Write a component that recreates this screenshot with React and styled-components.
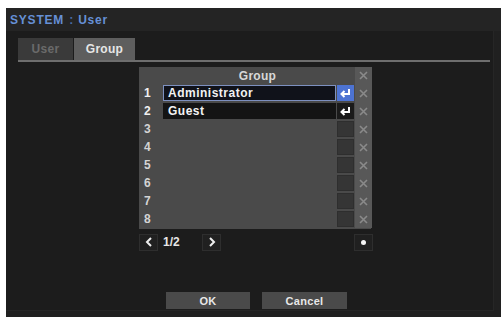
import React from 'react';
import styled, { createGlobalStyle } from 'styled-components';

const GlobalStyle = createGlobalStyle`
  html, body {
    margin: 0;
    padding: 0;
    background: #fff;
  }
  body {
    font-family: "Liberation Sans", Arial, sans-serif;
  }
`;

const groups = ['Administrator', 'Guest', '', '', '', '', '', ''];

function EnterIcon() {
  return (
    <svg width="11" height="10" viewBox="0 0 11 10">
      <path d="M9 1 V6 H2.5" stroke="#fff" strokeWidth="2" fill="none" />
      <path d="M4.5 3 L1.5 6 L4.5 9" stroke="#fff" strokeWidth="2" fill="none" />
    </svg>
  );
}

function CloseIcon() {
  return (
    <svg width="9" height="9" viewBox="0 0 9 9">
      <path d="M1 1 L8 8 M8 1 L1 8" stroke="#8a8a8a" strokeWidth="1.6" />
    </svg>
  );
}

function Chevron({ dir }) {
  const d = dir === 'left' ? 'M6 1 L2 5 L6 9' : 'M2 1 L6 5 L2 9';
  return (
    <svg width="8" height="10" viewBox="0 0 8 10">
      <path d={d} stroke="#eee" strokeWidth="2" fill="none" />
    </svg>
  );
}

export default function App() {
  return (
    <>
      <GlobalStyle />
      <Page>
        <Window>
          <TitleBar>
            <TitleStrong>SYSTEM</TitleStrong>
            <TitleSep>:</TitleSep>
            <TitleStrong>User</TitleStrong>
          </TitleBar>
          <Body>
            <Tabs>
              <Tab>User</Tab>
              <Tab active>Group</Tab>
            </Tabs>

            <Panel>
              <HeaderCell>Group</HeaderCell>
              <XCell><CloseIcon /></XCell>
              {groups.map((name, i) => (
                <React.Fragment key={i}>
                  <NumCell dim={!name}>{i + 1}</NumCell>
                  <NameCell>
                    {name && <NameBox selected={i === 0}>{name}</NameBox>}
                  </NameCell>
                  <EnterCell state={i === 0 ? 'active' : name ? 'filled' : 'empty'}>
                    {name && <EnterIcon />}
                  </EnterCell>
                  <XCell><CloseIcon /></XCell>
                </React.Fragment>
              ))}
            </Panel>

            <Pager>
              <PageButton><Chevron dir="left" /></PageButton>
              <PageText>1/2</PageText>
              <PageButton><Chevron dir="right" /></PageButton>
              <Spacer />
              <AddButton><Dot /></AddButton>
            </Pager>

            <Actions>
              <ActionButton>OK</ActionButton>
              <ActionButton wide>Cancel</ActionButton>
            </Actions>
          </Body>
        </Window>
      </Page>
    </>
  );
}

const Page = styled.div`
  padding: 8px 0 0 6px;
  width: 501px;
  height: 317px;
  box-sizing: border-box;
  overflow: hidden;
`;

const Window = styled.div`
  width: 495px;
  height: 309px;
  background: #1c1c1c;
  box-shadow: inset -7px -6px 0 #202020, inset -8px -7px 0 #262626;
  display: flex;
  flex-direction: column;
`;

const TitleBar = styled.div`
  height: 23px;
  background: #242424;
  display: flex;
  align-items: center;
  padding-left: 4px;
  gap: 5px;
`;

const TitleStrong = styled.span`
  font-size: 12px;
  font-weight: 700;
  letter-spacing: 0.8px;
  color: #6690d6;
`;

const TitleSep = styled.span`
  font-size: 12px;
  font-weight: 700;
  color: #4a6ea8;
`;

const Body = styled.div`
  display: flex;
  flex-direction: column;
  padding: 7px 11px 0 12px;
`;

const Tabs = styled.div`
  display: flex;
  gap: 1px;
  height: 22px;
  border-bottom: 2px solid #6e6e6e;
`;

const Tab = styled.div`
  width: ${p => (p.active ? '61px' : '55px')};
  background: ${p => (p.active ? '#5e5e5e' : '#3a3a3a')};
  color: ${p => (p.active ? '#e6e6e6' : '#6a6a6a')};
  font-size: 12px;
  font-weight: 700;
  letter-spacing: 0.3px;
  display: flex;
  align-items: center;
  justify-content: center;
`;

const Panel = styled.div`
  margin: 5px 0 0 121px;
  width: 232px;
  background: #4a4a4a;
  display: grid;
  grid-template-columns: 23px 173px 17px 17px;
  grid-template-rows: 17px repeat(8, 18px);
  column-gap: 1px;
  padding-bottom: 1px;
`;

const HeaderCell = styled.div`
  grid-column: 1 / 4;
  color: #d8d8d8;
  font-size: 12px;
  font-weight: 700;
  letter-spacing: 0.3px;
  display: flex;
  align-items: center;
  justify-content: center;
  padding-left: 22px;
`;

const XCell = styled.div`
  background: #585858;
  display: flex;
  align-items: center;
  justify-content: center;
`;

const NumCell = styled.div`
  color: ${p => (p.dim ? '#d4d4d4' : '#f0f0f0')};
  font-size: 12px;
  font-weight: 700;
  display: flex;
  align-items: center;
  padding-left: 5px;
`;

const NameCell = styled.div`
  display: flex;
  align-items: center;
`;

const NameBox = styled.div`
  width: 100%;
  height: 16px;
  box-sizing: border-box;
  background: ${p => (p.selected ? '#10121a' : '#141414')};
  border: 1px solid ${p => (p.selected ? '#7d90c0' : '#141414')};
  color: #f2f2f2;
  font-size: 12px;
  font-weight: 700;
  letter-spacing: 0.5px;
  display: flex;
  align-items: center;
  padding-left: 4px;
`;

const enterBg = { active: '#4d73d2', filled: '#1a1a1a', empty: '#353535' };

const EnterCell = styled.div`
  margin: 1px 0;
  background: ${p => enterBg[p.state]};
  border: 1px solid ${p => (p.state === 'empty' ? '#2e2e2e' : enterBg[p.state])};
  display: flex;
  align-items: center;
  justify-content: center;
`;

const Pager = styled.div`
  margin: 5px 0 0 121px;
  width: 234px;
  height: 16px;
  display: flex;
  align-items: center;
`;

const PageButton = styled.div`
  width: 17px;
  height: 15px;
  background: #202020;
  border: 1px solid #2e2e2e;
  display: flex;
  align-items: center;
  justify-content: center;
`;

const PageText = styled.div`
  width: 44px;
  padding-left: 5px;
  box-sizing: border-box;
  color: #e6e6e6;
  font-size: 12px;
  font-weight: 700;
`;

const Spacer = styled.div`
  flex: 1;
`;

const AddButton = styled(PageButton)`
  width: 17px;
`;

const Dot = styled.div`
  width: 5px;
  height: 5px;
  border-radius: 50%;
  background: #f4f4f4;
`;

const Actions = styled.div`
  margin: 42px 0 0 148px;
  display: flex;
  gap: 12px;
`;

const ActionButton = styled.div`
  width: ${p => (p.wide ? '85px' : '84px')};
  height: 17px;
  background: #4a4a4a;
  color: #e8e8e8;
  font-size: 11px;
  font-weight: 700;
  letter-spacing: 0.3px;
  display: flex;
  align-items: center;
  justify-content: center;
`;
